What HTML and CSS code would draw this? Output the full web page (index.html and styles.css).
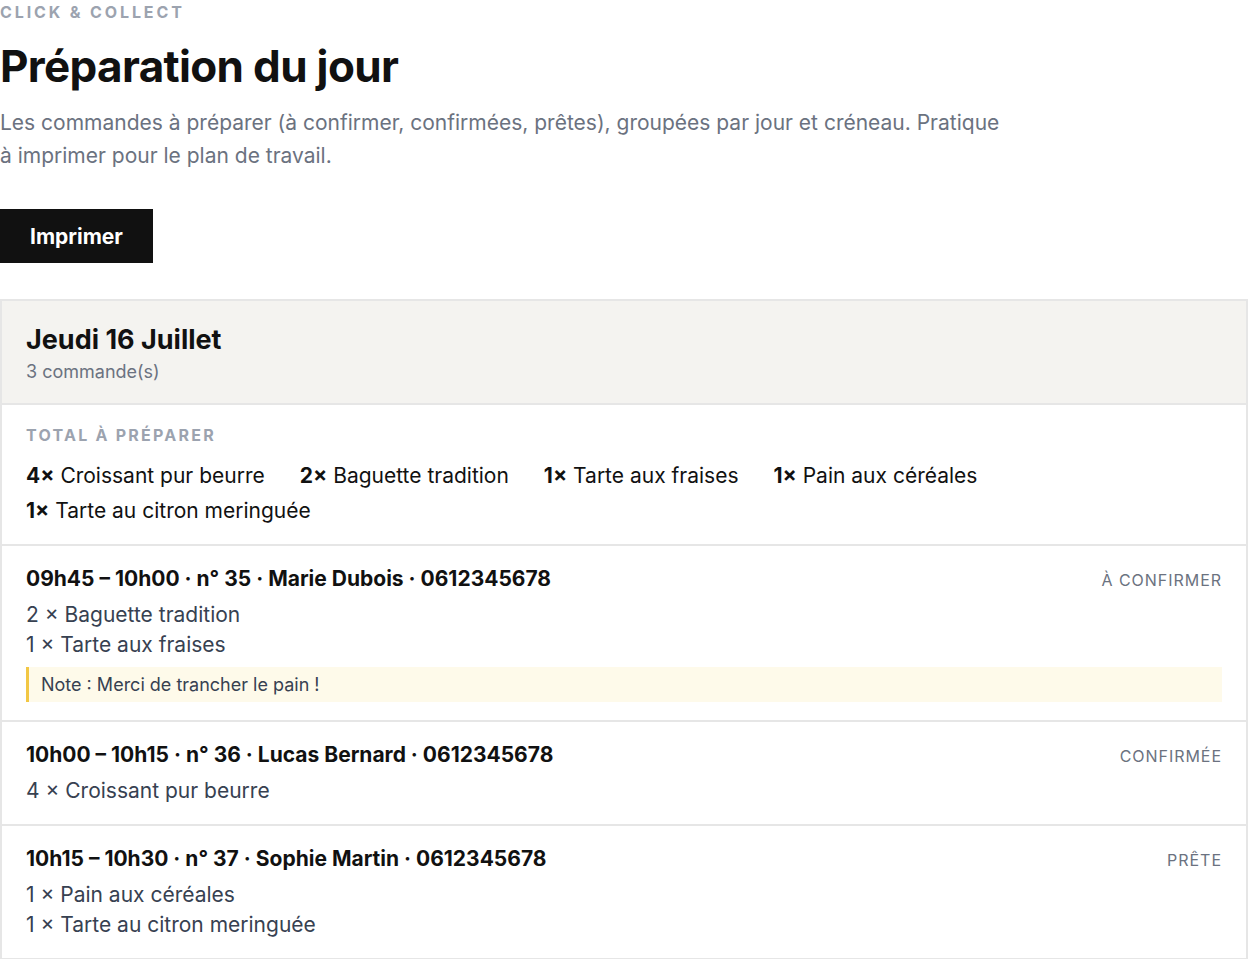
FILE: index.html
```html
<!DOCTYPE html>
<html lang="fr">
    <head>
        <meta charset="utf-8">
        <title>Préparation du jour</title>
        <link rel="stylesheet" href="styles.css">
    </head>
    <body>
        <div class="page">
            <div class="eyebrow">Click &amp; Collect</div>
            <h1>Préparation du jour</h1>
            <p class="intro">Les commandes à préparer (à confirmer, confirmées, prêtes), groupées par jour et créneau. Pratique à imprimer pour le plan de travail.</p>
            <button class="print-btn" type="button">Imprimer</button>

            <div class="day">
                <div class="day-head">
                    <h2>Jeudi 16 Juillet</h2>
                    <div class="day-count">3 commande(s)</div>
                </div>

                <div class="totals">
                    <div class="totals-label">Total à préparer</div>
                    <ul class="totals-list">
                        <li><b>4×</b> Croissant pur beurre</li>
                        <li><b>2×</b> Baguette tradition</li>
                        <li><b>1×</b> Tarte aux fraises</li>
                        <li><b>1×</b> Pain aux céréales</li>
                        <li><b>1×</b> Tarte au citron meringuée</li>
                    </ul>
                </div>

                <div class="order">
                    <div class="order-top">
                        <div class="order-title">09h45 – 10h00 · n° 35 · Marie Dubois · 0612345678</div>
                        <div class="status">À confirmer</div>
                    </div>
                    <ul class="order-items">
                        <li>2 × Baguette tradition</li>
                        <li>1 × Tarte aux fraises</li>
                    </ul>
                    <div class="note">Note : Merci de trancher le pain !</div>
                </div>

                <div class="order">
                    <div class="order-top">
                        <div class="order-title">10h00 – 10h15 · n° 36 · Lucas Bernard · 0612345678</div>
                        <div class="status">Confirmée</div>
                    </div>
                    <ul class="order-items">
                        <li>4 × Croissant pur beurre</li>
                    </ul>
                </div>

                <div class="order">
                    <div class="order-top">
                        <div class="order-title">10h15 – 10h30 · n° 37 · Sophie Martin · 0612345678</div>
                        <div class="status">Prête</div>
                    </div>
                    <ul class="order-items">
                        <li>1 × Pain aux céréales</li>
                        <li>1 × Tarte au citron meringuée</li>
                    </ul>
                </div>
            </div>
        </div>
    </body>
</html>
```

FILE: styles.css
```css
body{
    margin: 0;
    font-family: Inter, "Liberation Sans", sans-serif;
    color: #111;
    background: #fff;
}

ul{
    list-style: none;
    margin: 0;
    padding: 0;
}

.eyebrow{
    font-size: 16px;
    line-height: 24px;
    font-weight: 700;
    letter-spacing: 0.18em;
    text-transform: uppercase;
    color: #9ca3af;
}

h1{
    margin: 16px 0 0;
    font-size: 44px;
    line-height: 53px;
    font-weight: 700;
    letter-spacing: -0.015em;
    color: #111;
}

.intro{
    margin: 13px 0 0;
    max-width: 1000px;
    font-size: 21px;
    line-height: 33px;
    color: #6b7280;
}

.print-btn{
    display: block;
    margin: 37px 0 0;
    height: 54px;
    padding: 0 30px;
    border: 0;
    background: #111;
    color: #fff;
    font-family: inherit;
    font-size: 21px;
    font-weight: 700;
}

.day{
    margin-top: 36px;
    border: 2px solid #e6e6e6;
}

.day-head{
    background: #f4f3f0;
    padding: 24px 24px 19px;
    border-bottom: 2px solid #e6e6e6;
}

.day-head h2{
    margin: 0;
    font-size: 27px;
    line-height: 30px;
    font-weight: 700;
}

.day-count{
    margin-top: 5px;
    font-size: 18px;
    line-height: 24px;
    color: #6b7280;
}

.totals{
    padding: 20px 24px 18px;
}

.totals-label{
    font-size: 16px;
    line-height: 20px;
    font-weight: 700;
    letter-spacing: 0.14em;
    text-transform: uppercase;
    color: #9ca3af;
}

.totals-list{
    margin-top: 16px;
    display: flex;
    flex-wrap: wrap;
    column-gap: 35px;
    row-gap: 5px;
    font-size: 21px;
    line-height: 30px;
}

.totals-list b{
    font-weight: 700;
}

.order{
    border-top: 2px solid #e6e6e6;
    padding: 21px 24px 18px;
}

.order-top{
    display: flex;
    justify-content: space-between;
    align-items: baseline;
}

.order-title{
    font-size: 21px;
    line-height: 24px;
    font-weight: 700;
}

.status{
    font-size: 16px;
    letter-spacing: 0.06em;
    text-transform: uppercase;
    color: #6b7280;
}

.order-items{
    margin-top: 9px;
    font-size: 21px;
    line-height: 30px;
    color: #374151;
}

.note{
    margin-top: 7px;
    padding: 0 12px;
    border-left: 3px solid #f2c744;
    background: #fefaea;
    font-size: 18px;
    line-height: 35px;
    color: #374151;
}
```
